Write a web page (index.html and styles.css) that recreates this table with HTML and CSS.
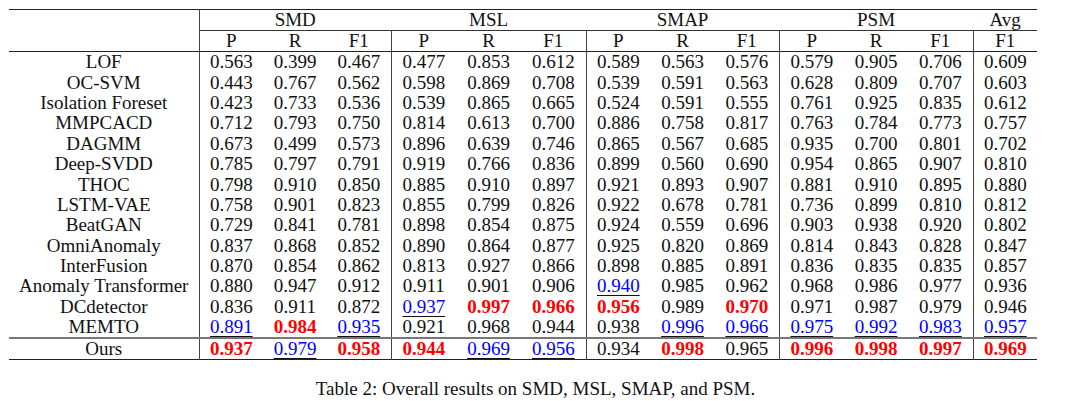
FILE: index.html
```html
<!DOCTYPE html>
<html>
<head>
<meta charset="utf-8">
<link rel="stylesheet" href="styles.css">
</head>
<body>
<div class="page">
<table class="results">
  <colgroup>
    <col class="c-name">
    <col class="c64"><col class="c64"><col class="c64">
    <col class="c65"><col class="c65"><col class="c65">
    <col class="c64"><col class="c65"><col class="c64">
    <col class="c65"><col class="c64"><col class="c65">
    <col class="c64">
  </colgroup>
  <thead>
    <tr class="h1">
      <th class="name" rowspan="2"></th>
      <th colspan="3" class="grp">SMD</th>
      <th colspan="3" class="grp">MSL</th>
      <th colspan="3" class="grp">SMAP</th>
      <th colspan="3" class="grp">PSM</th>
      <th class="grp">Avg</th>
    </tr>
    <tr class="h2">
      <th>P</th><th>R</th><th class="end">F1</th>
      <th>P</th><th>R</th><th class="end">F1</th>
      <th>P</th><th>R</th><th class="end">F1</th>
      <th>P</th><th>R</th><th class="end">F1</th>
      <th>F1</th>
    </tr>
  </thead>
  <tbody>
    <tr><td class="name">LOF</td><td>0.563</td><td>0.399</td><td class="end">0.467</td><td>0.477</td><td>0.853</td><td class="end">0.612</td><td>0.589</td><td>0.563</td><td class="end">0.576</td><td>0.579</td><td>0.905</td><td class="end">0.706</td><td>0.609</td></tr>
    <tr><td class="name">OC-SVM</td><td>0.443</td><td>0.767</td><td class="end">0.562</td><td>0.598</td><td>0.869</td><td class="end">0.708</td><td>0.539</td><td>0.591</td><td class="end">0.563</td><td>0.628</td><td>0.809</td><td class="end">0.707</td><td>0.603</td></tr>
    <tr><td class="name">Isolation Foreset</td><td>0.423</td><td>0.733</td><td class="end">0.536</td><td>0.539</td><td>0.865</td><td class="end">0.665</td><td>0.524</td><td>0.591</td><td class="end">0.555</td><td>0.761</td><td>0.925</td><td class="end">0.835</td><td>0.612</td></tr>
    <tr><td class="name">MMPCACD</td><td>0.712</td><td>0.793</td><td class="end">0.750</td><td>0.814</td><td>0.613</td><td class="end">0.700</td><td>0.886</td><td>0.758</td><td class="end">0.817</td><td>0.763</td><td>0.784</td><td class="end">0.773</td><td>0.757</td></tr>
    <tr><td class="name">DAGMM</td><td>0.673</td><td>0.499</td><td class="end">0.573</td><td>0.896</td><td>0.639</td><td class="end">0.746</td><td>0.865</td><td>0.567</td><td class="end">0.685</td><td>0.935</td><td>0.700</td><td class="end">0.801</td><td>0.702</td></tr>
    <tr><td class="name">Deep-SVDD</td><td>0.785</td><td>0.797</td><td class="end">0.791</td><td>0.919</td><td>0.766</td><td class="end">0.836</td><td>0.899</td><td>0.560</td><td class="end">0.690</td><td>0.954</td><td>0.865</td><td class="end">0.907</td><td>0.810</td></tr>
    <tr><td class="name">THOC</td><td>0.798</td><td>0.910</td><td class="end">0.850</td><td>0.885</td><td>0.910</td><td class="end">0.897</td><td>0.921</td><td>0.893</td><td class="end">0.907</td><td>0.881</td><td>0.910</td><td class="end">0.895</td><td>0.880</td></tr>
    <tr><td class="name">LSTM-VAE</td><td>0.758</td><td>0.901</td><td class="end">0.823</td><td>0.855</td><td>0.799</td><td class="end">0.826</td><td>0.922</td><td>0.678</td><td class="end">0.781</td><td>0.736</td><td>0.899</td><td class="end">0.810</td><td>0.812</td></tr>
    <tr><td class="name">BeatGAN</td><td>0.729</td><td>0.841</td><td class="end">0.781</td><td>0.898</td><td>0.854</td><td class="end">0.875</td><td>0.924</td><td>0.559</td><td class="end">0.696</td><td>0.903</td><td>0.938</td><td class="end">0.920</td><td>0.802</td></tr>
    <tr><td class="name">OmniAnomaly</td><td>0.837</td><td>0.868</td><td class="end">0.852</td><td>0.890</td><td>0.864</td><td class="end">0.877</td><td>0.925</td><td>0.820</td><td class="end">0.869</td><td>0.814</td><td>0.843</td><td class="end">0.828</td><td>0.847</td></tr>
    <tr><td class="name">InterFusion</td><td>0.870</td><td>0.854</td><td class="end">0.862</td><td>0.813</td><td>0.927</td><td class="end">0.866</td><td>0.898</td><td>0.885</td><td class="end">0.891</td><td>0.836</td><td>0.835</td><td class="end">0.835</td><td>0.857</td></tr>
    <tr><td class="name">Anomaly Transformer</td><td>0.880</td><td>0.947</td><td class="end">0.912</td><td>0.911</td><td>0.901</td><td class="end">0.906</td><td><span class="second">0.940</span></td><td>0.985</td><td class="end">0.962</td><td>0.968</td><td>0.986</td><td class="end">0.977</td><td>0.936</td></tr>
    <tr><td class="name">DCdetector</td><td>0.836</td><td>0.911</td><td class="end">0.872</td><td><span class="second">0.937</span></td><td><span class="best">0.997</span></td><td class="end"><span class="best">0.966</span></td><td><span class="best">0.956</span></td><td>0.989</td><td class="end"><span class="best">0.970</span></td><td>0.971</td><td>0.987</td><td class="end">0.979</td><td>0.946</td></tr>
    <tr><td class="name">MEMTO</td><td><span class="second">0.891</span></td><td><span class="best">0.984</span></td><td class="end"><span class="second">0.935</span></td><td>0.921</td><td>0.968</td><td class="end">0.944</td><td>0.938</td><td><span class="second">0.996</span></td><td class="end"><span class="second">0.966</span></td><td><span class="second">0.975</span></td><td><span class="second">0.992</span></td><td class="end"><span class="second">0.983</span></td><td><span class="second">0.957</span></td></tr>
    <tr class="ours"><td class="name">Ours</td><td><span class="best">0.937</span></td><td><span class="second">0.979</span></td><td class="end"><span class="best">0.958</span></td><td><span class="best">0.944</span></td><td><span class="second">0.969</span></td><td class="end"><span class="second">0.956</span></td><td>0.934</td><td><span class="best">0.998</span></td><td class="end">0.965</td><td><span class="best">0.996</span></td><td><span class="best">0.998</span></td><td class="end"><span class="best">0.997</span></td><td><span class="best">0.969</span></td></tr>
  </tbody>
</table>
<p class="caption">Table 2: Overall results on SMD, MSL, SMAP, and PSM.</p>
</div>
</body>
</html>
```

FILE: styles.css
```css
html, body {
  margin: 0;
  padding: 0;
  background: #ffffff;
}

.page {
  padding-top: 9px;
  font-family: "Liberation Serif", "Times New Roman", serif;
  color: #111111;
}

.results {
  margin-left: 9px;
  width: 1028px;
  table-layout: fixed;
  border-collapse: collapse;
  border-top: 1px solid #222222;
  border-bottom: 1px solid #222222;
  font-size: 19px;
  line-height: 20px;
}

.c-name { width: 190px; }
.c64 { width: 64px; }
.c65 { width: 65px; }

.results th,
.results td {
  padding: 0;
  text-align: center;
  font-weight: normal;
  white-space: nowrap;
  height: 20.4px;
}

.results .h1 th {
  height: 20px;
}

.results .h1 th.grp {
  border-bottom: 1px solid #333333;
}

.results .h2 th {
  height: 19px;
  border-bottom: 1px solid #222222;
}

.results th.name {
  border-right: 1px solid #444444;
  border-bottom: 1px solid #222222;
}

.results td.name {
  border-right: 1px solid #444444;
}

.results .end {
  border-right: 1px solid #444444;
}

.results .ours td {
  border-top: 2px solid #777777;
  height: 19px;
}

.best {
  color: #ff0000;
  font-weight: bold;
}

.second {
  color: #0000ff;
  text-decoration: underline;
  text-decoration-color: #111111;
  text-decoration-thickness: 1px;
  text-underline-offset: 3px;
}

.caption {
  margin: 19px 0 0 0;
  text-align: center;
  font-size: 19px;
  line-height: 20px;
}
```
